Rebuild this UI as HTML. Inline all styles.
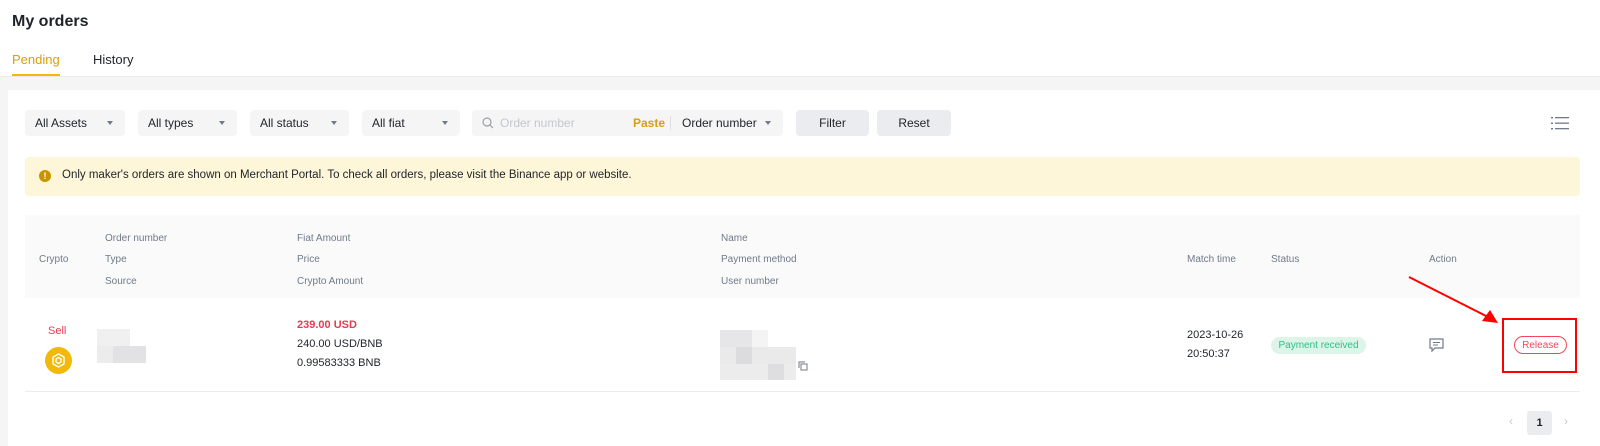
<!DOCTYPE html>
<html><head><meta charset="utf-8"><style>
*{margin:0;padding:0;box-sizing:border-box}
body{width:1600px;height:446px;overflow:hidden;background:#f5f5f5;font-family:"Liberation Sans",sans-serif;color:#1e2329;position:relative}
.a{position:absolute;white-space:nowrap}
.top{position:absolute;left:0;top:0;width:1600px;height:77px;background:#fff;border-bottom:1px solid #eaeaea}
.card{position:absolute;left:8px;top:90px;width:1592px;height:356px;background:#fff}
.sel{position:absolute;top:110px;height:26px;background:#f5f5f5;border-radius:4px;font-size:12px;line-height:26px;padding-left:10px;color:#1e2329}
.sel .c{position:absolute;right:12px;top:11px;width:0;height:0;border-left:3.5px solid transparent;border-right:3.5px solid transparent;border-top:4px solid #707a8a}
.btn{position:absolute;top:110px;height:26px;background:#eaecef;border-radius:4px;font-size:12px;line-height:26px;text-align:center;color:#1e2329}
.h{position:absolute;font-size:10px;color:#707a8a;white-space:nowrap}
.t{position:absolute;font-size:11px;white-space:nowrap;color:#1e2329}
</style></head><body>
<div class="top"></div>
<div class="a" style="left:12px;top:13px;font-size:16px;font-weight:bold">My orders</div>
<div class="a" style="left:12px;top:52px;font-size:13px;color:#d89f0f">Pending</div>
<div class="a" style="left:93px;top:52px;font-size:13px">History</div>
<div class="a" style="left:12px;top:74px;width:48px;height:2px;background:#f0b90b"></div>
<div class="card"></div>
<div class="sel" style="left:25px;width:100px">All Assets<span class="c"></span></div>
<div class="sel" style="left:138px;width:99px">All types<span class="c"></span></div>
<div class="sel" style="left:250px;width:99px">All status<span class="c"></span></div>
<div class="sel" style="left:362px;width:98px">All fiat<span class="c"></span></div>
<div class="sel" style="left:472px;width:311px;padding-left:28px;color:#c4c7cc">Order number
<svg style="position:absolute;left:10px;top:7px" width="12" height="12" viewBox="0 0 12 12"><circle cx="5" cy="5" r="4" fill="none" stroke="#9aa0a8" stroke-width="1.2"/><path d="M8 8l3 3" stroke="#9aa0a8" stroke-width="1.2"/></svg>
<span style="position:absolute;left:161px;color:#d89f0f;font-weight:bold">Paste</span>
<span style="position:absolute;left:198px;top:6px;width:1px;height:14px;background:#e0e0e0"></span>
<span style="position:absolute;left:210px;color:#1e2329">Order number</span><span class="c"></span></div>
<div class="btn" style="left:796px;width:73px">Filter</div>
<div class="btn" style="left:877px;width:74px">Reset</div>
<svg class="a" style="left:1551px;top:116px" width="18" height="15" viewBox="0 0 18 15"><g fill="#707a8a"><rect x="0" y="1" width="2" height="1.5"/><rect x="0" y="6.5" width="2" height="1.5"/><rect x="0" y="12" width="2" height="1.5"/><rect x="4" y="1" width="14" height="1.3"/><rect x="4" y="6.5" width="14" height="1.3"/><rect x="4" y="12" width="14" height="1.3"/></g></svg>
<div class="a" style="left:25px;top:157px;width:1555px;height:39px;background:#fef6d8;border-radius:4px"></div>
<div class="a" style="left:39px;top:170px;width:12px;height:12px;border-radius:50%;background:#c99400;color:#fff;font-size:9px;font-weight:bold;text-align:center;line-height:12px">!</div>
<div class="a" style="left:62px;top:169px;font-size:11.5px">Only maker's orders are shown on Merchant Portal. To check all orders, please visit the Binance app or website.</div>
<div class="a" style="left:25px;top:215px;width:1555px;height:83px;background:#fafafa"></div>
<div class="h" style="left:39px;top:254px">Crypto</div>
<div class="h" style="left:105px;top:233px">Order number</div>
<div class="h" style="left:105px;top:254px">Type</div>
<div class="h" style="left:105px;top:276px">Source</div>
<div class="h" style="left:297px;top:233px">Fiat Amount</div>
<div class="h" style="left:297px;top:254px">Price</div>
<div class="h" style="left:297px;top:276px">Crypto Amount</div>
<div class="h" style="left:721px;top:233px">Name</div>
<div class="h" style="left:721px;top:254px">Payment method</div>
<div class="h" style="left:721px;top:276px">User number</div>
<div class="h" style="left:1187px;top:254px">Match time</div>
<div class="h" style="left:1271px;top:254px">Status</div>
<div class="h" style="left:1429px;top:254px">Action</div>
<div class="a" style="left:25px;top:391px;width:1555px;height:1px;background:#eaecef"></div>
<div class="t" style="left:48px;top:325px;color:#e33b54">Sell</div>
<div class="a" style="left:45px;top:347px;width:27px;height:27px;border-radius:50%;background:#f0b90b"></div>
<svg class="a" style="left:50px;top:352px" width="17" height="17" viewBox="0 0 17 17"><path d="M8.5 2L14 5v7l-5.5 3L3 12V5z M8.5 5.5L11 7v3l-2.5 1.5L6 10V7z" fill="none" stroke="#fff" stroke-width="1.4"/></svg>
<div class="a" style="left:97px;top:329px;width:33px;height:17px;background:#f0f0f0"></div>
<div class="a" style="left:113px;top:346px;width:33px;height:17px;background:#e2e2e4"></div>
<div class="a" style="left:97px;top:346px;width:16px;height:17px;background:#ececec"></div>
<div class="t" style="left:297px;top:319px;color:#e33b54;font-weight:bold">239.00 USD</div>
<div class="t" style="left:297px;top:338px">240.00 USD/BNB</div>
<div class="t" style="left:297px;top:357px">0.99583333 BNB</div>
<div class="a" style="left:720px;top:330px;width:32px;height:17px;background:#e6e6e8"></div>
<div class="a" style="left:752px;top:330px;width:16px;height:17px;background:#f4f4f4"></div>
<div class="a" style="left:720px;top:347px;width:76px;height:17px;background:#eaeaeb"></div>
<div class="a" style="left:736px;top:347px;width:16px;height:17px;background:#dcdcde"></div>
<div class="a" style="left:720px;top:364px;width:76px;height:16px;background:#ececed"></div>
<div class="a" style="left:768px;top:364px;width:16px;height:16px;background:#dedee0"></div>
<svg class="a" style="left:798px;top:361px" width="10" height="10" viewBox="0 0 10 10"><path d="M1 7V1h6" fill="none" stroke="#8a8f98" stroke-width="1.2"/><rect x="3" y="3" width="6" height="6" fill="none" stroke="#8a8f98" stroke-width="1.2"/></svg>
<div class="t" style="left:1187px;top:329px">2023-10-26</div>
<div class="t" style="left:1187px;top:348px">20:50:37</div>
<div class="a" style="left:1271px;top:337px;width:95px;height:17px;border-radius:9px;background:#dcf5e8;color:#2ebd85;font-size:10px;line-height:17px;text-align:center">Payment received</div>
<svg class="a" style="left:1429px;top:338px" width="15" height="14" viewBox="0 0 15 14"><path d="M1 1h13v9H6l-3 3v-3H1z" fill="none" stroke="#707a8a" stroke-width="1.2"/><path d="M4 4.5h7M4 7h5" stroke="#707a8a" stroke-width="1.1"/></svg>
<div class="a" style="left:1514px;top:336px;width:53px;height:18px;border-radius:9px;border:1px solid #f6465d;color:#f6465d;font-size:10px;display:flex;align-items:center;justify-content:center">Release</div>
<div class="a" style="left:1502px;top:318px;width:75px;height:55px;border:2px solid #f00"></div>
<svg class="a" style="left:1400px;top:270px" width="110" height="60" viewBox="0 0 110 60"><path d="M9 7L92 49" stroke="#f00" stroke-width="2"/><path d="M98 53L82 51L90 40z" fill="#f00"/></svg>
<div class="a" style="left:1509px;top:414px;color:#c4c7cc;font-size:12px">‹</div>
<div class="a" style="left:1527px;top:411px;width:25px;height:24px;background:#eaecef;border-radius:3px;font-size:11px;text-align:center;line-height:24px;font-weight:bold">1</div>
<div class="a" style="left:1564px;top:414px;color:#c4c7cc;font-size:12px">›</div>
</body></html>
